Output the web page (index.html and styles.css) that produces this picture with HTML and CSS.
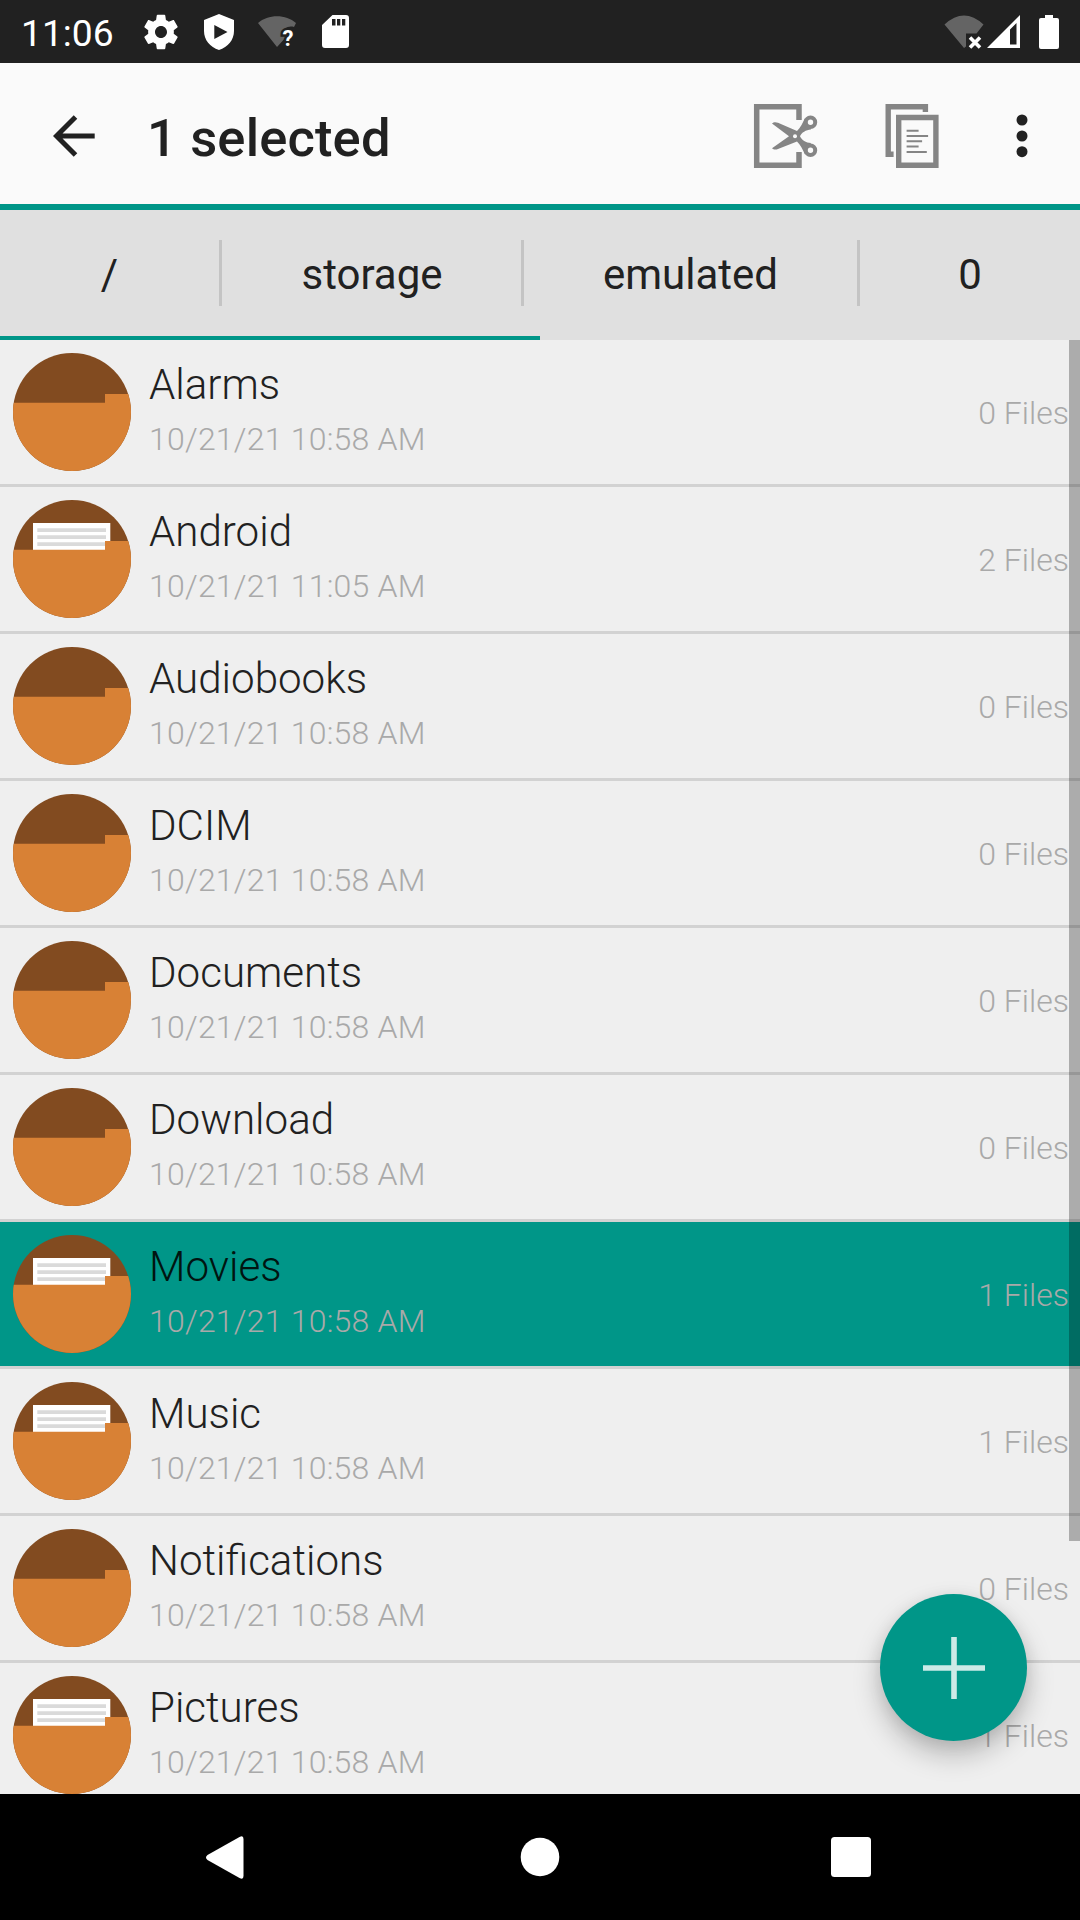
FILE: index.html
```html
<!DOCTYPE html>
<html lang="en">
<head>
<meta charset="utf-8">
<title>File manager</title>
<link rel="stylesheet" href="styles.css">
</head>
<body>
<svg class="defs" aria-hidden="true">
  <defs>
    <clipPath id="disc"><circle cx="59" cy="59" r="59"/></clipPath>
    <symbol id="folder-empty" viewBox="0 0 118 118">
      <g clip-path="url(#disc)">
        <path fill="#824b20" d="M0 0h118v118H0z"/>
        <path fill="#d88135" d="M0 49.8h92V41h26v77H0z"/>
      </g>
    </symbol>
    <symbol id="folder-full" viewBox="0 0 118 118">
      <g clip-path="url(#disc)">
        <path fill="#824b20" d="M0 0h118v118H0z"/>
        <path fill="#fff" d="M20 23h77.3v30H20z"/>
        <path fill="#dadada" d="M24.3 28.2H93v3.7H24.3zM24.3 35.2H93v3.7H24.3zM24.3 42.3H93V46H24.3z"/>
        <path fill="#d88135" d="M0 49.8h92V41h26v77H0z"/>
      </g>
    </symbol>
  </defs>
</svg>
<div class="screen">
  <header class="status">
    <span class="clock">11:06</span>
    <svg class="ic-gear" width="36" height="36" viewBox="1.65 1.5 20.7 21"><path fill="#fff" d="M19.43 12.98c.04-.32.07-.64.07-.98s-.03-.66-.07-.98l2.11-1.65c.19-.15.24-.42.12-.64l-2-3.46c-.12-.22-.39-.3-.61-.22l-2.49 1c-.52-.4-1.08-.73-1.69-.98l-.38-2.65C14.46 2.18 14.25 2 14 2h-4c-.25 0-.46.18-.49.42l-.38 2.65c-.61.25-1.17.59-1.69.98l-2.49-1c-.23-.09-.49 0-.61.22l-2 3.46c-.13.22-.07.49.12.64l2.11 1.65c-.04.32-.07.65-.07.98s.03.66.07.98l-2.11 1.65c-.19.15-.24.42-.12.64l2 3.46c.12.22.39.3.61.22l2.49-1c.52.4 1.08.73 1.69.98l.38 2.65c.03.24.24.42.49.42h4c.25 0 .46-.18.49-.42l.38-2.65c.61-.25 1.17-.59 1.69-.98l2.49 1c.23.09.49 0 .61-.22l2-3.46c.12-.22.07-.49-.12-.64l-2.11-1.65zM12 15.5c-1.93 0-3.5-1.57-3.5-3.5s1.57-3.5 3.5-3.5 3.5 1.57 3.5 3.5-1.57 3.5-3.5 3.500z"/></svg>
    <svg class="ic-shield" width="30" height="36" viewBox="0 0 30 36"><path fill="#fff" fill-rule="evenodd" d="M15 0 30 6v11c0 9-6 16-15 19C6 33 0 26 0 17V6zM10.300 11v14L23.500 18z"/></svg>
    <svg class="ic-wifi" width="40" height="34" viewBox="0 0 40 34"><path fill="#646464" d="M19 32 0 8C10-1 28-1 38 8l-2 4c-8-2-12 4-10 8l3 1z"/><text class="question" x="24.500" y="30.500">?</text></svg>
    <svg class="ic-sd" width="28" height="33" viewBox="0 0 28 33"><path fill="#fff" fill-rule="evenodd" d="M10.500 0H24q3 0 3 3v27q0 3-3 3H3q-3 0-3-3V10zM10 4v6.500h3.500V4zM15 4v6.500h3.300V4zM20 4v6.500h3.300V4z"/></svg>
    <span class="grow"></span>
    <svg width="41" height="34" viewBox="0 0 41 34"><path fill="#646464" d="M20 33 .5 9.500Q20-8.500 39.500 9.500L32.500 18.500H22v13z"/><path stroke="#fff" stroke-width="3.600" d="m26 22.500 10 10m0-10-10 10"/></svg>
    <svg class="ic-cell" width="33" height="33" viewBox="0 0 33 33"><path fill="#fff" fill-rule="evenodd" d="M33 0v33H0zM23 14.500V29.500h6.500V8z"/></svg>
    <svg class="ic-battery" width="20" height="34" viewBox="0 0 20 34"><path fill="#fff" d="M6 0h8v3h4q2 0 2 2v27q0 2-2 2H2q-2 0-2-2V5q0-2 2-2h4z"/></svg>
  </header>

  <div class="toolbar">
    <svg width="42" height="42" viewBox="0 0 42 42"><path fill="none" stroke="#212121" stroke-width="5" d="M41.700 21H3.500M22.500 2 3.500 21l19 19"/></svg>
    <h1 class="title">1 selected</h1>
    <svg class="ic-cut" width="66" height="66" viewBox="0 0 66 66">
      <path fill="none" stroke="#858585" stroke-width="5.500" d="M46 17V3.700H3.700v58.600H46V49"/>
      <path fill="#858585" d="M19 20.500c1.500-1.700 4-1.600 6-.8L44 28c3.500-3.500 5.500-7.500 8-13l6 11.500c-5 .5-9.500 3-11 6.800 1.500 3.800 6 6.500 11 6.800L52 51.500c-2.500-5.500-4.500-9.500-8-13L25 46c-2 .8-4.500.9-6-.8l17-11.900z"/>
      <circle cx="57.500" cy="19.300" r="4.700" fill="#fafafa" stroke="#858585" stroke-width="4"/>
      <circle cx="57.500" cy="47.300" r="4.700" fill="#fafafa" stroke="#858585" stroke-width="4"/>
      <circle cx="42" cy="33.300" r="2" fill="#fafafa"/>
    </svg>
    <svg class="ic-copy" width="54" height="66" viewBox="0 0 54 66">
      <path fill="none" stroke="#858585" stroke-width="5.400" d="M8.600 51.300H3.200V3.700H40.400V9"/>
      <path fill="none" stroke="#858585" stroke-width="5.400" d="M13.700 14.500h37.200v47.800H13.700z"/>
      <path stroke="#858585" stroke-width="2" d="M21.600 27.700h12M21.600 33h21.500M21.600 38.200h15.500M21.600 43.500h12M21.600 48.900h20.200"/>
    </svg>
    <svg class="ic-more" width="12" height="44" viewBox="0 0 12 44"><g fill="#212121"><circle cx="6" cy="6" r="5.500"/><circle cx="6" cy="22" r="5.500"/><circle cx="6" cy="37.700" r="5.500"/></g></svg>
  </div>

  <nav class="tabs">
    <span class="tab tab-root">/</span>
    <span class="tab tab-storage">storage</span>
    <span class="tab tab-emulated">emulated</span>
    <span class="tab tab-user">0</span>
    <i class="indicator"></i>
  </nav>

  <main class="content">
    <ul class="list">
      <li class="row"><svg class="disc"><use href="#folder-empty"/></svg><div class="info"><b class="name">Alarms</b><span class="date">10/21/21 10:58 AM</span></div><span class="count">0 Files</span></li>
      <li class="row"><svg class="disc"><use href="#folder-full"/></svg><div class="info"><b class="name">Android</b><span class="date">10/21/21 11:05 AM</span></div><span class="count">2 Files</span></li>
      <li class="row"><svg class="disc"><use href="#folder-empty"/></svg><div class="info"><b class="name">Audiobooks</b><span class="date">10/21/21 10:58 AM</span></div><span class="count">0 Files</span></li>
      <li class="row"><svg class="disc"><use href="#folder-empty"/></svg><div class="info"><b class="name">DCIM</b><span class="date">10/21/21 10:58 AM</span></div><span class="count">0 Files</span></li>
      <li class="row"><svg class="disc"><use href="#folder-empty"/></svg><div class="info"><b class="name">Documents</b><span class="date">10/21/21 10:58 AM</span></div><span class="count">0 Files</span></li>
      <li class="row"><svg class="disc"><use href="#folder-empty"/></svg><div class="info"><b class="name">Download</b><span class="date">10/21/21 10:58 AM</span></div><span class="count">0 Files</span></li>
      <li class="row selected"><svg class="disc"><use href="#folder-full"/></svg><div class="info"><b class="name">Movies</b><span class="date">10/21/21 10:58 AM</span></div><span class="count">1 Files</span></li>
      <li class="row"><svg class="disc"><use href="#folder-full"/></svg><div class="info"><b class="name">Music</b><span class="date">10/21/21 10:58 AM</span></div><span class="count">1 Files</span></li>
      <li class="row"><svg class="disc"><use href="#folder-empty"/></svg><div class="info"><b class="name">Notifications</b><span class="date">10/21/21 10:58 AM</span></div><span class="count">0 Files</span></li>
      <li class="row"><svg class="disc"><use href="#folder-full"/></svg><div class="info"><b class="name">Pictures</b><span class="date">10/21/21 10:58 AM</span></div><span class="count">1 Files</span></li>
    </ul>
    <i class="scrollbar"></i>
    <div class="fab"><svg width="64" height="64" viewBox="0 0 64 64"><path fill="#cceae7" d="M29.200 1h5.600v28.200H63v5.600H34.800V63h-5.600V34.800H1v-5.600h28.200z"/></svg></div>
  </main>

  <footer class="navbar">
    <svg width="38" height="43" viewBox="0 0 38 43"><path fill="#fff" d="M33.500 1Q37.500-1 37.500 3v37q0 4-4 2L1.500 24q-3-2.500 0-5z"/></svg>
    <svg class="ic-home" width="40" height="40" viewBox="0 0 40 40"><circle cx="20" cy="20" r="19.300" fill="#fff"/></svg>
    <svg width="40" height="40" viewBox="0 0 40 40"><rect width="40" height="40" rx="3.500" fill="#fff"/></svg>
  </footer>
</div>
</body>
</html>
```

FILE: styles.css
```css
* { box-sizing: border-box; }
body { margin: 0; font-family: Roboto, sans-serif; color: #212121; }
svg { display: block; flex: none; }
.defs { position: absolute; width: 0; height: 0; }
.screen { width: 1080px; height: 1920px; display: flex; flex-direction: column; overflow: hidden; background: #efefef; }

.status { height: 63px; flex: none; display: flex; align-items: center; background: #212121; padding: 0 21px 0 21px; }
.clock { width: 123px; color: #fff; font-size: 37.2px; line-height: 63px; padding-top: 3px; }
.grow { flex: 1; }
.ic-gear { margin-right: 24px; margin-left: -1px; }
.ic-shield { margin-right: 24px; margin-left: 1px; }
.ic-wifi { margin-right: 24px; }
.question { font-size: 22px; font-weight: 700; fill: #fff; stroke: #212121; stroke-width: 5px; paint-order: stroke; }
.ic-cell { margin-left: 2px; }
.ic-battery { margin-left: 19px; }

.toolbar { height: 147px; flex: none; display: flex; align-items: center; background: #fafafa; border-bottom: 6px solid #009688; padding: 4px 52px 0 53px; }
.title { flex: 1; margin: 0; padding: 5px 0 0 52px; font-size: 52.5px; font-weight: 500; line-height: 62px; letter-spacing: .15px; }
.ic-cut { margin-right: 66px; }
.ic-copy { margin-right: 77px; }

.tabs { height: 130px; flex: none; display: flex; position: relative; background: #e0e0e0; padding-top: 30px; }
.tab { height: 66px; line-height: 69px; font-size: 42px; text-align: center; border-right: 3px solid #c4c4c4; }
.tab-root { width: 222px; }
.tab-storage { width: 302px; padding-left: 1px; }
.tab-emulated { width: 336px; }
.tab-user { width: 220px; border: 0; }
.indicator { position: absolute; left: 0; bottom: 0; width: 540px; height: 4px; background: #009688; }

.content { height: 1454px; flex: none; position: relative; overflow: hidden; }
.list { list-style: none; margin: 0; padding: 0; }
.row { height: 147px; display: flex; align-items: center; border-bottom: 3px solid #d2d2d2; padding: 0 11px 0 13px; }
.disc { width: 118px; height: 118px; }
.info { flex: 1; display: flex; flex-direction: column; padding-left: 18px; }
.name { font-size: 42.1px; font-weight: 300; line-height: 54px; }
.date, .count { font-size: 32px; font-weight: 300; color: #a9a9a9; }
.date { line-height: 54px; letter-spacing: .22px; }
.count { line-height: 40px; padding-top: 1px; }
.selected { background: #009688; }
.selected .name { color: #001411; }
.scrollbar { position: absolute; top: 0; right: 0; width: 11px; height: 1201px; background: rgba(0, 0, 0, .28); }
.fab { position: absolute; left: 880px; top: 1254px; width: 147px; height: 147px; border-radius: 50%; background: #009688; display: flex; align-items: center; justify-content: center; box-shadow: 0 14px 28px rgba(0, 0, 0, .23), 0 3px 16px rgba(0, 0, 0, .08); }

.navbar { height: 126px; flex: none; display: flex; align-items: center; justify-content: space-between; background: #000; padding: 0 209px 0 206px; }
.ic-home { margin-left: 4px; }
```
